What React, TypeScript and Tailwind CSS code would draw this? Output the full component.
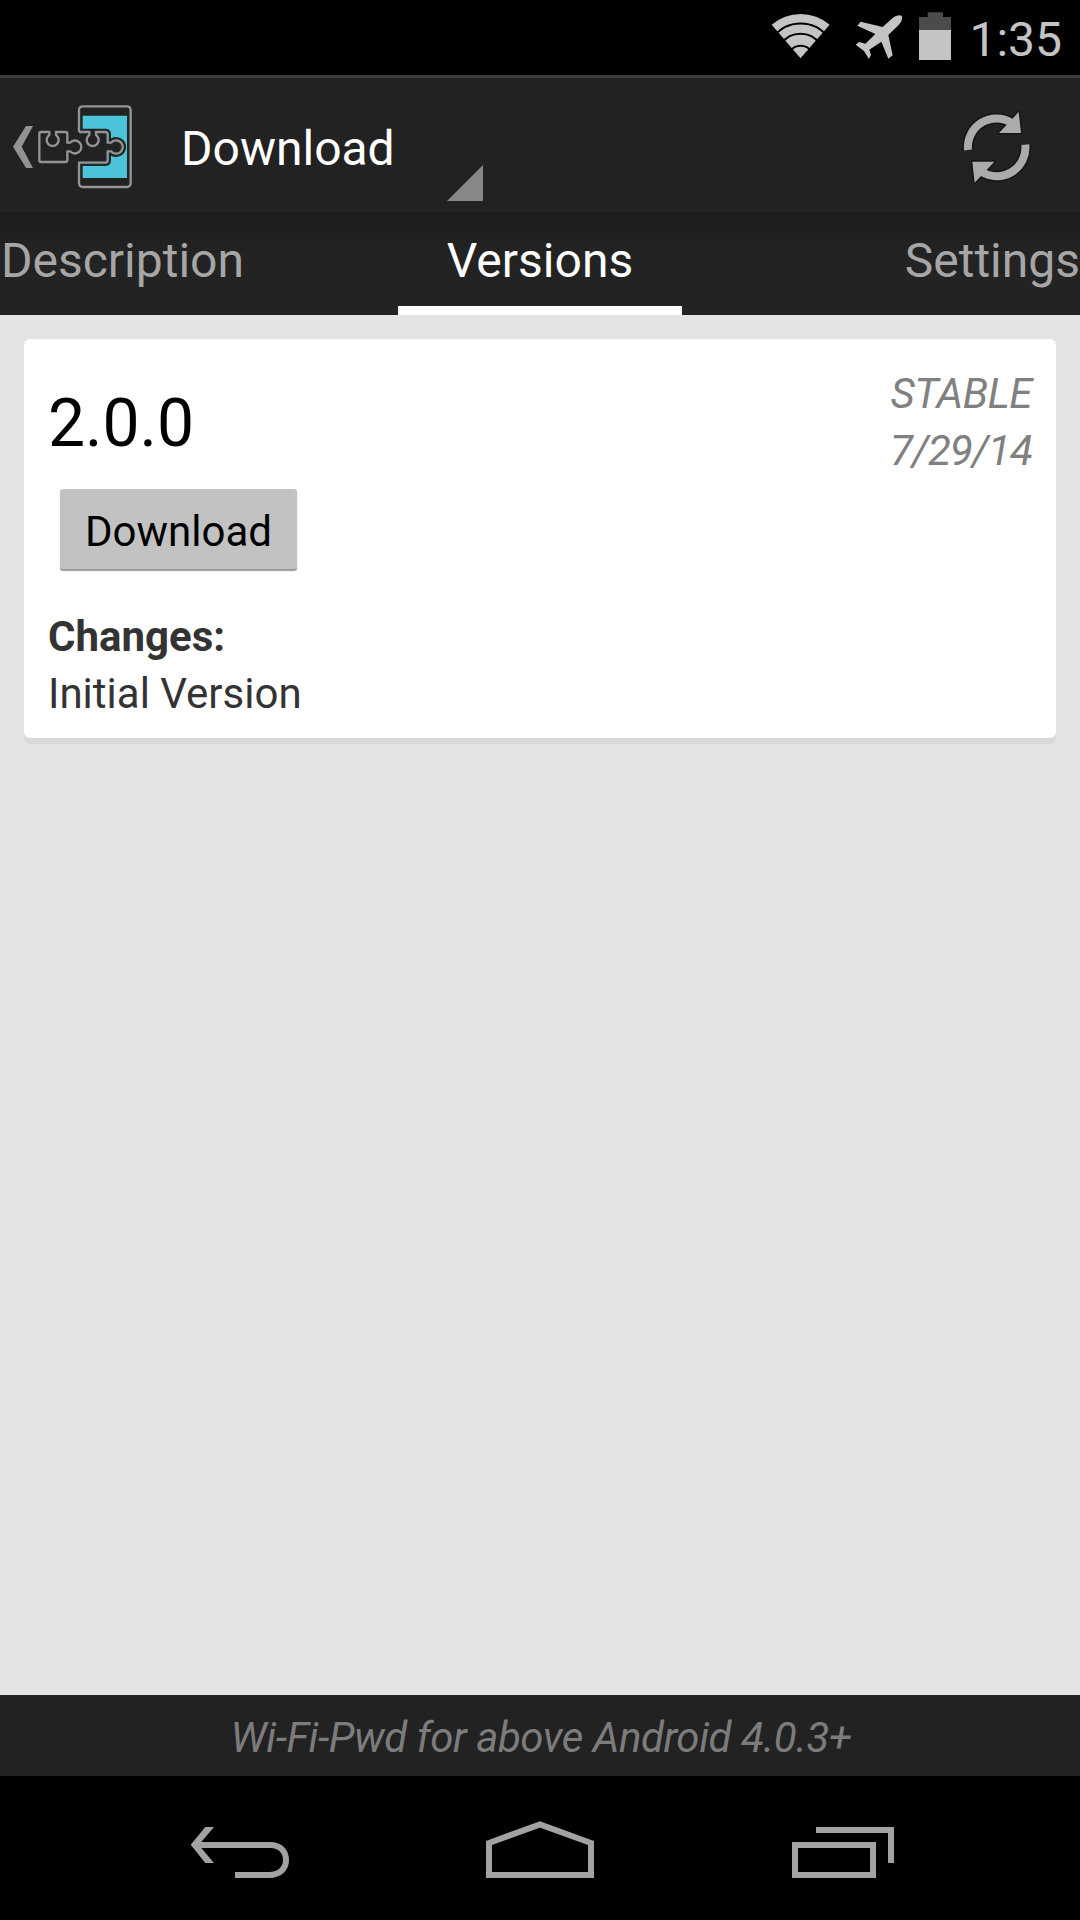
import React from 'react';

interface IconProps {
  className?: string;
}

const WifiIcon: React.FC<IconProps> = ({ className }) => (
  <svg viewBox="60 0 186 225" className={className}>
    <path d="M151.500 175 L65 74 A134 134 0 0 1 239 74 Z" fill="#c4c4c4" />
    <g fill="none" stroke="#000" strokeWidth="6">
      <path d="M70 112 A102 102 0 0 1 234 112" />
      <path d="M94 131 A70.500 70.500 0 0 1 209 131" />
      <path d="M120 155 A38 38 0 0 1 184 155" />
    </g>
  </svg>
);

const PlaneIcon: React.FC<IconProps> = ({ className }) => (
  <svg viewBox="315 0 144 225" className={className}>
    <path
      d="M455 48 C459 55 454 66 446 75 L415 105 L428 166 L415 176 L394 125 L358 149 L363 164 L357 177 L342 153 L317 134 L327 126 L346 131 L376 102 L322 77 L332 65 L398 81 L428 54 C438 46 451 44 455 48 Z"
      fill="#c4c4c4"
    />
  </svg>
);

const BatteryIcon: React.FC<IconProps> = ({ className }) => (
  <svg viewBox="507 0 96 225" className={className}>
    <path d="M533 37 H579 V51 H603 V90 H507 V51 H533 Z" fill="#4b4b4b" />
    <path d="M507 90 H603 V180 H507 Z" fill="#c4c4c4" />
  </svg>
);

const Logo: React.FC<IconProps> = ({ className }) => {
  const phone =
    'M237 126 H268 V135 A18 18 0 1 0 288 135 V126 H316 Q323 126 323 133 V158 H333 A20 20 0 1 1 333 184 H323 V211 Q323 218 316 218 H237';
  return (
    <svg viewBox="36 -45 360 411" className={className}>
      <path d="M78 108 H99 L65 170 L99 234 H78 L39 170 Z" fill="#929292" />
      <path d="M248 77 H381 V264 H248 Z" fill="#4bc3d8" />
      <path d={phone} fill="#222" stroke="#202527" strokeWidth="20" />
      <circle cx="278" cy="150" r="20" fill="#222" />
      <g fill="none" stroke="#949494" strokeWidth="7" strokeLinejoin="round">
        <path d={`${phone} V280 Q237 291 249 291 H380 Q392 291 392 279 V61 Q392 49 380 49 H249 Q237 49 237 61 V126`} />
        <path
          d="M123 126 H148 V135 A18 18 0 1 0 168 135 V126 H197 Q202 126 202 132 V158 H210 A19.500 19.500 0 1 1 210 184 H202 V210 Q202 216 196 216 H123 Q118 216 118 211 V131 Q118 126 123 126 Z"
          fill="#222"
        />
      </g>
    </svg>
  );
};

const RefreshIcon: React.FC<IconProps> = ({ className }) => (
  <svg viewBox="66 -45 210 411" className={className}>
    {[0, 180].map((angle) => (
      <g key={angle} transform={`rotate(${angle} 170 172)`}>
        <g stroke="#171717" strokeWidth="10" strokeLinejoin="round">
          <path d="M84 180 A86 86 0 0 1 216 99" fill="none" strokeWidth="34" />
          <path d="M236 66 L243 129 H177 Z" />
        </g>
        <path d="M84 180 A86 86 0 0 1 216 99" fill="none" stroke="#ababab" strokeWidth="24" />
        <path d="M236 66 L243 129 H177 Z" fill="#ababab" />
      </g>
    ))}
  </svg>
);

const StatusBar = () => (
  <div className="flex h-[75px] shrink-0 justify-end bg-black pr-[18px]">
    <WifiIcon className="h-[75px] w-[62px]" />
    <PlaneIcon className="ml-[23px] h-[75px] w-12" />
    <BatteryIcon className="ml-4 h-[75px] w-8" />
    <span className="ml-[18px] text-[48px] leading-[80px] text-[#c4c4c4]">1:35</span>
  </div>
);

const ActionBar = () => (
  <div className="flex h-[137px] shrink-0 border-t-[3px] border-[#3c3c3c] bg-[#222222] pl-3">
    <Logo className="-mt-[3px] h-[137px] w-[120px]" />
    <h1 className="ml-[49px] w-[302px] pt-[41px] text-[48px] leading-[60px] text-white">Download</h1>
    {/* Spinner corner */}
    <svg viewBox="0 0 36 36" className="-ml-9 mt-[87px] h-9 w-9">
      <path d="M36 0 V36 H0 Z" fill="#888888" />
    </svg>
    <RefreshIcon className="-mt-[3px] ml-auto mr-12 h-[137px] w-[70px]" />
  </div>
);

const Tabs = () => (
  <div className="grid h-[103px] shrink-0 grid-cols-[398px_284px_398px] grid-rows-[103px] bg-linear-to-b from-[#1c1c1c] to-[#232323] to-40% text-[48px] leading-[98px] text-[#a6a6a6]">
    <span className="pl-px">Description</span>
    <span className="h-[103px] border-b-[9px] border-white text-center text-white">Versions</span>
    <span className="text-right">Settings</span>
  </div>
);

const VersionCard = () => (
  <div className="mx-6 mt-6 flex h-[399px] justify-between rounded-[6px] bg-white px-6 shadow-[0_6px_0_#d9d9d9]">
    <div>
      <div className="pt-[46px] text-[66px] leading-[78px] text-black">2.0.0</div>
      <button className="ml-3 mt-[26px] block h-[80px] w-[237px] rounded-[3px] bg-[#c2c2c2] pt-[5px] text-[42px] text-black shadow-[0_2px_1px_#999999]">
        Download
      </button>
      <div className="mt-[39px] text-[42px] leading-[57px] text-[#333333]">
        <div className="font-bold">Changes:</div>
        <div>Initial Version</div>
      </div>
    </div>
    <div className="pt-[26px] text-right text-[42px] italic leading-[57px] text-[#808080]">
      <div className="tracking-[-0.4px]">STABLE</div>
      <div className="tracking-[-0.85px]">7/29/14</div>
    </div>
  </div>
);

const NavBar = () => (
  <div className="flex h-36 shrink-0 bg-black pl-[190px]">
    <svg viewBox="90 -72 297 432" className="h-36 w-[99px]">
      <path
        d="M92 134 L136 81 H162 L124 126 H330 C368 126 387 150 387 180 C387 210 366 234 327 234 H225 V216 H327 C355 216 369 200 369 180 C369 160 357 144 330 144 H124 L162 189 H136 Z"
        fill="#a2a2a2"
      />
    </svg>
    <svg viewBox="978 -72 324 432" className="ml-[197px] h-36 w-[108px]">
      <path d="M987 129 L1140 73 L1293 129 V225 H987 Z" fill="none" stroke="#a2a2a2" strokeWidth="18" />
    </svg>
    <svg viewBox="96 -72 306 432" className="ml-[198px] h-36 w-[102px]">
      <path d="M105 135 H339 V225 H105 Z M168 90 H393 V189" fill="none" stroke="#a2a2a2" strokeWidth="18" />
    </svg>
  </div>
);

export default function App() {
  return (
    <div className="flex h-[1920px] w-[1080px] flex-col overflow-hidden bg-[#e4e4e4] font-['Roboto',sans-serif]">
      <StatusBar />
      <ActionBar />
      <Tabs />
      <main className="flex-1">
        <VersionCard />
      </main>
      <footer className="h-[81px] shrink-0 bg-[#222222] pl-0.5 text-center text-[42px] italic leading-[86px] tracking-[-0.46px] text-[#7c7c7c]">
        Wi-Fi-Pwd for above Android 4.0.3+
      </footer>
      <NavBar />
    </div>
  );
}
